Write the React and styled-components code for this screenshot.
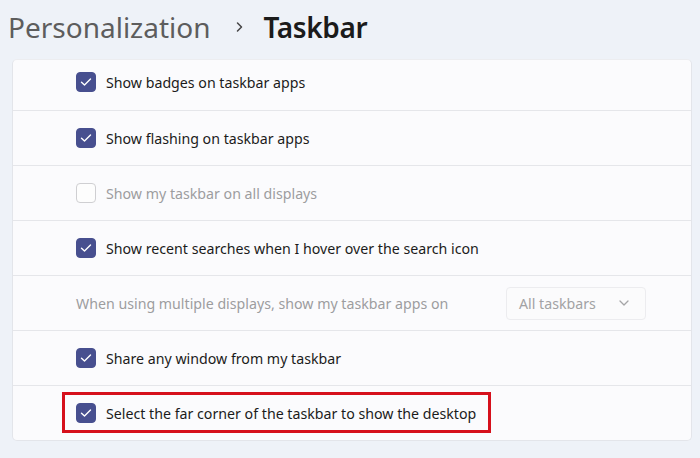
import React from 'react';
import styled, { createGlobalStyle } from 'styled-components';

const GlobalStyle = createGlobalStyle`
    html, body {
        margin: 0;
        padding: 0;
        background: #eef2f8;
    }
    body {
        font-family: "Noto Sans", "Open Sans", sans-serif;
        width: 700px;
        height: 458px;
        overflow: hidden;
    }
`;

const Page = styled.div`
    display: flex;
    flex-direction: column;
    padding: 0 8px 0 12px;
`;

const Header = styled.h1`
    display: flex;
    align-items: center;
    height: 59px;
    margin: 0 0 0 -4px;
    font-size: 28px;
    font-weight: 400;
    line-height: 1;
    padding-bottom: 6px;
    box-sizing: border-box;
`;

const Crumb = styled.span`
    color: ${props => (props.current ? '#1b1b1b' : '#5d5d5d')};
    font-weight: ${props => (props.current ? 600 : 400)};
    letter-spacing: ${props => (props.current ? '-0.4px' : '0')};
`;

const Chevron = styled.span`
    display: flex;
    margin: 0 20px 0 24px;
    color: #555;
`;

const Panel = styled.div`
    width: 680px;
    background: #fbfbfd;
    border: 1px solid #e3e5ea;
    border-top-color: #ecedf0;
    border-radius: 5px;
    box-sizing: border-box;
`;

const Row = styled.div`
    position: relative;
    display: flex;
    align-items: center;
    height: ${props => (props.first ? '50px' : '55px')};
    padding: 0 45px ${props => (props.first ? '6px' : '0')} 63px;
    box-sizing: border-box;
    border-top: ${props => (props.first ? 'none' : '1px solid #e5e6ea')};
`;

const Box = styled.span`
    display: flex;
    align-items: center;
    justify-content: center;
    width: 20px;
    height: 20px;
    flex-shrink: 0;
    border-radius: 4px;
    box-sizing: border-box;
    background: ${props => (props.checked ? '#474f8f' : '#fdfdfd')};
    border: 1px solid ${props => (props.checked ? '#474f8f' : '#cfcfd2')};
`;

const Label = styled.span`
    margin-left: 10px;
    font-size: 14.2px;
    color: ${props => (props.disabled ? '#9d9d9f' : '#1b1b1b')};
    white-space: nowrap;
`;

const Note = styled.span`
    flex: 1;
    font-size: 14.2px;
    color: #9d9d9f;
    white-space: nowrap;
`;

const Select = styled.div`
    display: flex;
    align-items: center;
    justify-content: space-between;
    width: 140px;
    height: 33px;
    padding: 0 16px 0 12px;
    box-sizing: border-box;
    border: 1px solid #ececef;
    border-radius: 4px;
    background: #fbfbfc;
    font-size: 14.2px;
    color: #a2a2a4;
`;

const Highlight = styled.div`
    position: absolute;
    left: 49px;
    top: 6px;
    width: 429px;
    height: 41px;
    border: 3px solid #d6101c;
    box-sizing: border-box;
    pointer-events: none;
`;

const Check = () => (
    <svg width="12" height="10" viewBox="0 0 12 10">
        <path d="M1.5 5.2 L4.5 8 L10.5 2" fill="none" stroke="#fff" strokeWidth="1.4" strokeLinecap="round" strokeLinejoin="round" />
    </svg>
);

const CheckRow = ({ checked, disabled, first, children, marked }) => (
    <Row first={first}>
        <Box checked={checked}>{checked && <Check />}</Box>
        <Label disabled={disabled}>{children}</Label>
        {marked && <Highlight />}
    </Row>
);

const App = () => {
    return (
        <Page>
            <GlobalStyle />
            <Header>
                <Crumb>Personalization</Crumb>
                <Chevron>
                    <svg width="9" height="14" viewBox="0 0 9 14">
                        <path d="M2.5 3 L6.5 7 L2.5 11" fill="none" stroke="#444" strokeWidth="1.5" strokeLinecap="round" strokeLinejoin="round" />
                    </svg>
                </Chevron>
                <Crumb current>Taskbar</Crumb>
            </Header>
            <Panel>
                <CheckRow first checked>Show badges on taskbar apps</CheckRow>
                <CheckRow checked>Show flashing on taskbar apps</CheckRow>
                <CheckRow disabled>Show my taskbar on all displays</CheckRow>
                <CheckRow checked>Show recent searches when I hover over the search icon</CheckRow>
                <Row>
                    <Note>When using multiple displays, show my taskbar apps on</Note>
                    <Select>
                        <span>All taskbars</span>
                        <svg width="10" height="6" viewBox="0 0 10 6">
                            <path d="M1 1 L5 5 L9 1" fill="none" stroke="#a5a5a7" strokeWidth="1.3" strokeLinecap="round" strokeLinejoin="round" />
                        </svg>
                    </Select>
                </Row>
                <CheckRow checked>Share any window from my taskbar</CheckRow>
                <CheckRow checked marked>Select the far corner of the taskbar to show the desktop</CheckRow>
            </Panel>
        </Page>
    );
};

export default App;
